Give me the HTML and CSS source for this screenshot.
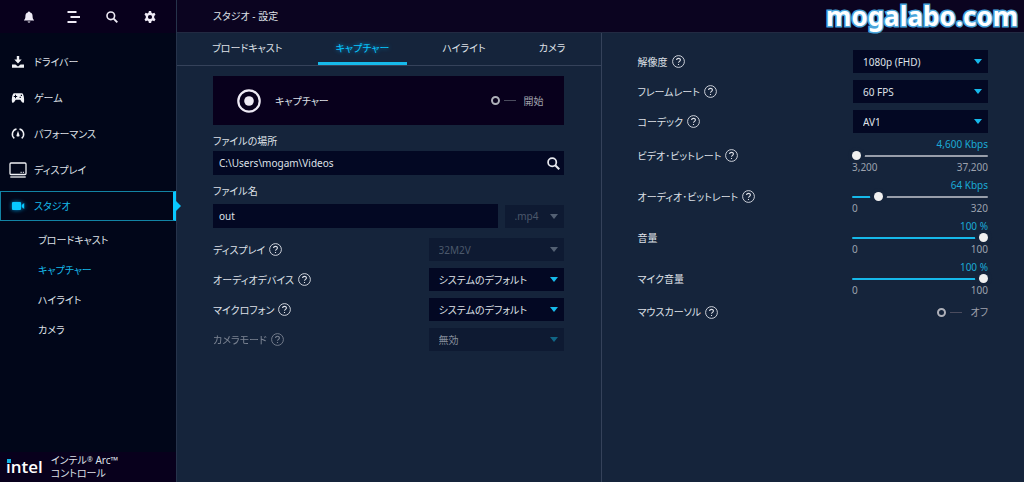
FILE: index.html
```html
<!DOCTYPE html>
<html lang="ja">
<head>
<meta charset="utf-8">
<meta name="viewport" content="width=device-width, initial-scale=1">
<title>スタジオ - 設定</title>
<link rel="stylesheet" href="styles.css">
</head>
<body>
<svg class="defs" aria-hidden="true">
  <symbol id="help" viewBox="0 0 13 13"><circle cx="6.5" cy="6.5" r="5.9" fill="none" stroke="currentColor" stroke-width="0.9"/><path d="M4.6 5.1C4.6 2.7 8.5 2.8 8.4 5C8.3 6.4 6.6 6.3 6.5 7.8M6.5 8.9V10" fill="none" stroke="currentColor" stroke-width="1.1"/></symbol>
  <symbol id="search" viewBox="0 0 12 12"><circle cx="4.8" cy="4.8" r="3.8" fill="none" stroke="currentColor" stroke-width="1.6"/><path d="M7.6 7.6L11.3 11.3" stroke="currentColor" stroke-width="1.9"/></symbol>
</svg>
<div class="app">
  <aside class="sidebar">
    <div class="toolbar">
      <button aria-label="通知"><svg width="12" height="12" viewBox="0 0 12 12"><path d="M6 .5C7 .5 7.2 1.4 7.2 1.6C9.2 2.1 9.6 3.7 9.6 5.5C9.6 7.5 10.2 8.2 11 9V9.6H1V9C1.8 8.2 2.4 7.5 2.4 5.5C2.4 3.7 2.8 2.1 4.8 1.6C4.8 1.2 5.2 .5 6 .5ZM4.6 10.4H7.4C7.2 12 4.8 12 4.6 10.4Z" fill="currentColor"/></svg></button>
      <button aria-label="メニュー"><svg width="13" height="12" viewBox="0 0 13 12"><path d="M.5 1H9.5M3.5 6H13M.5 11H9.5" stroke="currentColor" stroke-width="2"/></svg></button>
      <button aria-label="検索"><svg width="12" height="12"><use href="#search"/></svg></button>
      <button aria-label="設定"><svg width="12" height="12" viewBox="0 0 12 12"><path d="M4.9 0H7.1L7.5 1.8L8.6 2.4L10.4 1.8L11.5 3.7L10.2 5V7L11.5 8.3L10.4 10.2L8.6 9.6L7.5 10.2L7.1 12H4.9L4.5 10.2L3.4 9.6L1.6 10.2L.5 8.3L1.8 7V5L.5 3.7L1.6 1.8L3.4 2.4L4.5 1.8ZM6 3.9A2.1 2.1 0 1 0 6 8.1A2.1 2.1 0 1 0 6 3.9Z" fill="currentColor" fill-rule="evenodd"/></svg></button>
    </div>
    <nav class="menu">
      <a class="item" href="#driver"><svg width="18" height="16" viewBox="0 0 18 16"><path d="M7.8 2H10.2V5.5H12.7L9 9.5L5.3 5.5H7.8ZM3 10.5H6.4L9 12.5L11.6 10.5H15V13.8H3Z" fill="currentColor"/></svg>ドライバー</a>
      <a class="item" href="#game"><svg width="18" height="16" viewBox="0 0 18 16"><path d="M5 3.2H13C14.6 3.2 15.5 9 15 12C14.8 13.2 13.5 13 12.8 12L11.3 9.8H6.7L5.2 12C4.5 13 3.2 13.2 3 12C2.5 9 3.4 3.2 5 3.2ZM6 4.8V6H4.8V7H6V8.2H7V7H8.2V6H7V4.8ZM11.8 4.7V5.9H13V4.7ZM10.6 6.8V8H11.8V6.8Z" fill="currentColor" fill-rule="evenodd"/></svg>ゲーム</a>
      <a class="item" href="#performance"><svg width="18" height="16" viewBox="0 0 18 16"><path d="M5.3 12.3A5.4 5.4 0 0 1 7.5 2.9M10.5 2.9A5.4 5.4 0 0 1 12.7 12.3" fill="none" stroke="currentColor" stroke-width="1.5"/><path d="M9 4.8L10.3 8.7A1.4 1.4 0 1 1 7.7 8.7Z" fill="currentColor"/></svg>パフォーマンス</a>
      <a class="item" href="#display"><svg width="18" height="16" viewBox="0 0 18 16"><rect x="1" y="1" width="16" height="11.5" rx="1" fill="none" stroke="currentColor" stroke-width="1.3"/><path d="M1.3 15H16.7" stroke="currentColor" stroke-width="1.3"/><path d="M11.5 10.3H12.8M13.8 10.3H15" stroke="currentColor"/></svg>ディスプレイ</a>
      <a class="item active" href="#studio" aria-current="true"><svg width="18" height="16" viewBox="0 0 18 16"><path d="M4 4H11Q12 4 12 5V11Q12 12 11 12H4Q3 12 3 11V5Q3 4 4 4ZM12.8 7L15.2 5.1V10.9L12.8 9Z" fill="currentColor"/></svg>スタジオ</a>
    </nav>
    <nav class="submenu">
      <a href="#broadcast">ブロードキャスト</a>
      <a class="current" href="#capture">キャプチャー</a>
      <a href="#highlight">ハイライト</a>
      <a href="#camera">カメラ</a>
    </nav>
    <footer class="brand"><span class="intel">intel</span><span class="product"><span>インテル<small>®</small> Arc™</span><span>コントロール</span></span></footer>
  </aside>
  <div class="main">
    <header class="titlebar"><h1>スタジオ - 設定</h1><span class="site">mogalabo.com</span></header>
    <div class="panels">
      <section class="panel">
        <nav class="tabs">
          <a href="#broadcast">ブロードキャスト</a>
          <a class="selected" href="#capture">キャプチャー</a>
          <a href="#highlight">ハイライト</a>
          <a href="#camera">カメラ</a>
        </nav>
        <div class="content">
          <div class="capture">
            <svg width="24" height="24" viewBox="0 0 24 24"><circle cx="12" cy="12" r="10.7" fill="none" stroke="currentColor" stroke-width="2.2"/><circle cx="12" cy="12" r="4.8" fill="currentColor"/></svg>
            <span>キャプチャー</span>
            <label class="switch"><input type="checkbox" role="switch"><span>開始</span></label>
          </div>
          <label class="caption" for="location">ファイルの場所</label>
          <div class="pathbox"><input id="location" type="text" value="C:\Users\mogam\Videos"><button aria-label="参照"><svg width="13" height="13"><use href="#search"/></svg></button></div>
          <label class="caption" for="filename">ファイル名</label>
          <div class="filename"><input id="filename" type="text" value="out"><span class="drop"><select aria-label="拡張子" disabled><option>.mp4</option></select></span></div>
          <div class="rows">
            <div class="row"><label for="display">ディスプレイ</label><svg class="help"><use href="#help"/></svg><span class="drop"><select id="display" disabled><option>32M2V</option></select></span></div>
            <div class="row"><label for="audio">オーディオデバイス</label><svg class="help"><use href="#help"/></svg><span class="drop"><select id="audio"><option>システムのデフォルト</option></select></span></div>
            <div class="row"><label for="mic">マイクロフォン</label><svg class="help"><use href="#help"/></svg><span class="drop"><select id="mic"><option>システムのデフォルト</option></select></span></div>
            <div class="row dim"><label for="cam">カメラモード</label><svg class="help"><use href="#help"/></svg><span class="drop"><select id="cam" disabled><option>無効</option></select></span></div>
          </div>
        </div>
      </section>
      <section class="panel options">
        <div class="rows">
          <div class="row"><label for="res">解像度</label><svg class="help"><use href="#help"/></svg><span class="drop"><select id="res"><option>1080p (FHD)</option></select></span></div>
          <div class="row"><label for="fps">フレームレート</label><svg class="help"><use href="#help"/></svg><span class="drop"><select id="fps"><option>60 FPS</option></select></span></div>
          <div class="row"><label for="codec">コーデック</label><svg class="help"><use href="#help"/></svg><span class="drop"><select id="codec"><option>AV1</option></select></span></div>
        </div>
        <div class="row range"><label for="vbr">ビデオ･ビットレート</label><svg class="help"><use href="#help"/></svg><div class="slider"><output>4,600 Kbps</output><input id="vbr" type="range" min="3200" max="37200" value="3200" style="--fill:0%"><div class="limits"><span>3,200</span><span>37,200</span></div></div></div>
        <div class="row range"><label for="abr">オーディオ･ビットレート</label><svg class="help"><use href="#help"/></svg><div class="slider"><output>64 Kbps</output><input id="abr" type="range" min="0" max="320" value="56" style="--fill:20%"><div class="limits"><span>0</span><span>320</span></div></div></div>
        <div class="row range"><label for="vol">音量</label><div class="slider"><output>100 %</output><input id="vol" type="range" min="0" max="100" value="100" style="--fill:100%"><div class="limits"><span>0</span><span>100</span></div></div></div>
        <div class="row range"><label for="micvol">マイク音量</label><div class="slider"><output>100 %</output><input id="micvol" type="range" min="0" max="100" value="100" style="--fill:100%"><div class="limits"><span>0</span><span>100</span></div></div></div>
        <div class="row cursor"><label for="cursor">マウスカーソル</label><svg class="help"><use href="#help"/></svg><label class="switch"><input id="cursor" type="checkbox" role="switch"><span>オフ</span></label></div>
      </section>
    </div>
  </div>
</div>
</body>
</html>
```

FILE: styles.css
```css
:root {
  --base: #15243b;
  --deep: #030823;
  --violet: #08001c;
  --cyan: #16b9ea;
  --text: #dfe1e8;
}
*, ::before, ::after { box-sizing: border-box; }
body {
  margin: 0;
  background: var(--base);
  color: var(--text);
  font: 10px/16px "Noto Sans", "Noto Sans CJK JP", sans-serif;
  font-feature-settings: "palt";
}
button, input, select { font: inherit; font-feature-settings: inherit; color: inherit; }
button { border: 0; padding: 0; background: none; display: flex; }
a { color: inherit; text-decoration: none; }
.defs { display: none; }
.app { display: flex; min-height: 100vh; }

.sidebar { width: 176px; flex: none; display: flex; flex-direction: column; background: #010619; }
.toolbar { height: 33px; display: flex; align-items: center; gap: 26px; padding-left: 23px; background: var(--violet); color: #eeeaf5; }
.toolbar button:nth-child(2) { margin-left: 6px; }
.menu { display: flex; flex-direction: column; gap: 6px; padding-top: 14px; }
.item { height: 30px; display: flex; align-items: center; gap: 7px; padding-left: 9px; border: 1px solid transparent; border-left-width: 0; }
.item svg { color: #f0f1f5; }
.item.active { position: relative; padding-left: 8px; color: var(--cyan); border-color: #1283a4; border-left-width: 1px; border-right: 3px solid #08c8ff; }
.item.active svg { color: #08c8ff; filter: drop-shadow(0 0 2px #0099d8); }
.item.active::after { content: ""; position: absolute; right: -8px; top: 9px; border: 5px solid transparent; border-left-color: #08c8ff; border-right: 0; }
.submenu { display: flex; flex-direction: column; gap: 14px; padding: 11px 0 0 38px; }
.submenu .current { color: var(--cyan); }
.brand { margin-top: auto; height: 30px; display: flex; align-items: center; gap: 8px; padding-left: 6px; background: var(--violet); }
.intel { position: relative; font: 600 17px/24px "Open Sans", sans-serif; color: #fff; }
.intel::before { content: ""; position: absolute; left: 1px; top: 4px; width: 4px; height: 4px; background: #10b5e7; }
.product { display: flex; flex-direction: column; line-height: 13px; }
.product > span { height: 13px; }
.product small { font-size: 7px; line-height: 7px; vertical-align: 2px; }

.main { flex: 1; min-width: 0; display: flex; flex-direction: column; border-left: 1px solid #26334b; }
.titlebar { height: 33px; display: flex; align-items: center; justify-content: space-between; padding: 0 6px 0 36px; background: #0b0420; border-bottom: 1px solid #222a42; }
h1 { margin: 0; font-size: 10px; font-weight: 400; }
.site { font: 700 24px/32px "Noto Sans", sans-serif; font-size: 26px; color: #fff; -webkit-text-stroke: 3px #49a5dc; paint-order: stroke fill; }
.panels { flex: 1; display: grid; grid-template-columns: 1fr 1fr; }
.panel { min-width: 0; }
.tabs { height: 33px; display: flex; align-items: stretch; gap: 17px; padding-left: 17px; border-bottom: 1px solid #35425a; }
.tabs a { padding: 0 18px; line-height: 31px; }
.tabs .selected { color: #08c8ff; text-shadow: 0 0 4px #0091cf; border-bottom: 3px solid var(--cyan); }
.content { padding: 10px 37px 0 36px; }
.capture { height: 49px; display: flex; align-items: center; gap: 14px; padding: 0 20px 0 24px; background: var(--violet); color: #eeeaf5; }
.capture span { color: var(--text); }
.switch { margin-left: auto; display: flex; align-items: center; gap: 8px; }
.switch span, .capture .switch span { color: #a0a2ad; }
.switch input { appearance: none; margin: 0; width: 25px; height: 9px; background: linear-gradient(#4b4c5e, #4b4c5e) right center / 12px 1px no-repeat; }
.switch input::before { content: ""; display: block; width: 9px; height: 9px; border: 2px solid #aeb0b9; border-radius: 50%; }
.caption { display: block; padding: 8px 0 2px; }
.pathbox { height: 24px; display: flex; align-items: center; padding-right: 4px; background: var(--deep); color: #e8e9ef; }
.content input[type="text"] { flex: 1; min-width: 0; height: 24px; border: 0; padding: 0 6px; background: var(--deep); color: var(--text); }
.pathbox + .caption { padding: 8px 0 5px; }
.filename { display: flex; align-items: center; gap: 7px; }
.filename .drop { width: 59px; }

.rows { display: flex; flex-direction: column; gap: 7px; padding-top: 10px; }
.row { display: flex; align-items: center; gap: 4px; }
.help { width: 13px; height: 13px; flex: none; }
.dim label, .dim .help { opacity: 0.5; }
.drop { width: 135px; display: flex; position: relative; }
.row .drop { margin-left: auto; }
.drop::after { content: ""; position: absolute; right: 6px; top: 9px; border: 4px solid transparent; border-top: 5px solid var(--cyan); border-bottom: 0; pointer-events: none; }
.drop:has(:disabled)::after { border-top-color: #536073; }
.dim .drop:has(:disabled)::after { border-top-color: #116585; }
select { appearance: none; width: 100%; height: 23px; border: 0; padding: 0 10px; background: var(--deep); }
select:disabled { background: #0e1a32; color: #4b586b; opacity: 1; }
.dim select:disabled { color: #858d9b; }

.options { border-left: 1px solid #35425a; padding: 7px 36px 0; }
.options .rows { padding-bottom: 2px; }
.range { height: 41px; }
.slider { width: 136px; margin-left: auto; display: flex; flex-direction: column; line-height: 13px; }
.slider output { position: relative; z-index: 1; color: #1ba9d5; text-align: right; }
.slider input { appearance: none; width: 100%; height: 10px; margin: 0; background: none; }
.slider input::-webkit-slider-runnable-track { height: 2px; border-radius: 1px; background: linear-gradient(90deg, var(--cyan) var(--fill), #989eaa var(--fill)); }
.slider input::-webkit-slider-thumb { appearance: none; width: 9px; height: 9px; margin-top: -4px; border-radius: 50%; background: #f0f0f0; box-shadow: 0 0 0 4px var(--base); }
.limits { position: relative; z-index: 1; display: flex; justify-content: space-between; color: #9ca2ae; }
.cursor { padding-top: 5px; }
```
